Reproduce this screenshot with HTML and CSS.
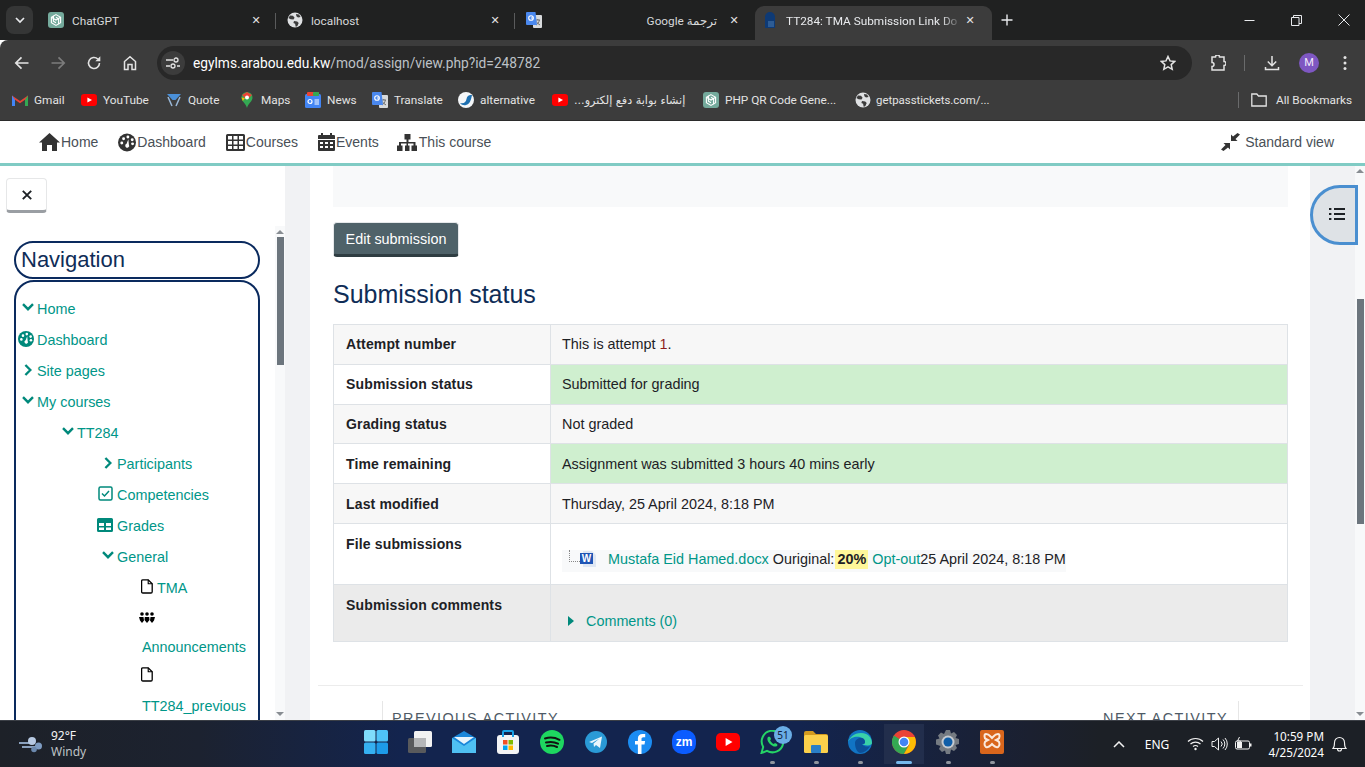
FILE: index.html
```html
<!DOCTYPE html>
<html lang="en">
<head>
<meta charset="utf-8">
<title>TT284: TMA Submission Link</title>
<link rel="stylesheet" href="styles.css">
</head>
<body>
<svg class="defs" width="0" height="0" aria-hidden="true">
  <defs>
    <symbol id="gpt" viewBox="0 0 16 16"><rect width="16" height="16" rx="3" fill="#74aa9c"/><g fill="none" stroke="#fff" stroke-width="1.1"><path d="M8 2.6l4.6 2.7v5.4L8 13.4l-4.6-2.7V5.3z"/><path d="M5.4 3.8v5.4L8 10.8M10.6 12.2V6.8L8 5.2M3.4 5.3l4.6 2.7 4.6-2.7"/></g></symbol>
    <symbol id="globe" viewBox="0 0 16 16"><circle cx="8" cy="8" r="7.5" fill="#dfe1e3"/><path d="M3 3.5l3 .2 1.6 2-1.1 1.8L3.6 7.2 1.4 6zM9 2l3 .5 1.6 2.4L11 5.6 9.4 4.2zM7 9l3.2.4 1.5 1.6-1.4 3.2-1.6.6-.6-3L6.4 11z" fill="#3c3c3c"/></symbol>
    <symbol id="gtrans" viewBox="0 0 16 16"><rect x="7" y="3" width="9" height="13" rx="1" fill="#d8dadc"/><path d="M9.5 8h4.5M11.8 7v1M10 13c2-1 3-3 3.4-5M10.4 9.5c.6 1.4 2 2.6 3.6 3.4" stroke="#666" stroke-width=".9" fill="none"/><path d="M1 0h8.5L11 13H1a1 1 0 0 1-1-1V1a1 1 0 0 1 1-1z" fill="#4a88ee"/><circle cx="5" cy="6" r="2.3" fill="none" stroke="#fff" stroke-width="1.1"/><path d="M5 6h2.4" stroke="#fff" stroke-width="1"/></symbol>
    <symbol id="yt" viewBox="0 0 16 12"><rect width="16" height="12" rx="3.2" fill="#f00"/><path d="M6.4 3.4L11 6l-4.6 2.6z" fill="#fff"/></symbol>
    <symbol id="chev-d" viewBox="0 0 12 8"><path d="M1 1.2l5 5 5-5" fill="none" stroke="#00897b" stroke-width="2.4"/></symbol>
    <symbol id="chev-r" viewBox="0 0 8 12"><path d="M1.4 1l5 5-5 5" fill="none" stroke="#00897b" stroke-width="2.4"/></symbol>
    <symbol id="file" viewBox="0 0 12 15"><path d="M1.8.8h5.4l4 4v8a1.2 1.2 0 0 1-1.2 1.2H1.8A1.2 1.2 0 0 1 .6 12.8V2A1.2 1.2 0 0 1 1.8.8z" fill="#fff" stroke="#000" stroke-width="1.3"/><path d="M7.2.8v4h4" fill="none" stroke="#000" stroke-width="1.1"/></symbol>
    <symbol id="gauge" viewBox="0 0 20 20"><circle cx="10" cy="10" r="10" fill="currentColor"/><circle cx="4.2" cy="10.5" r="1.6" fill="#fff"/><circle cx="6.2" cy="5.8" r="1.6" fill="#fff"/><circle cx="11" cy="3.9" r="1.6" fill="#fff"/><circle cx="15.8" cy="7" r="1.6" fill="#fff"/><circle cx="16.2" cy="11.5" r="1.6" fill="#fff"/><path d="M11.5 6.5L9.5 11.5a2.2 2.2 0 1 0 2.6.9z" fill="#fff"/></symbol>
  </defs>
</svg>

<header class="tabstrip">
  <button class="tabmenu"><svg width="10" height="7" viewBox="0 0 10 7"><path d="M1 1l4 4 4-4" fill="none" stroke="#e8eaed" stroke-width="1.7"/></svg></button>
  <div class="tab"><svg class="fav"><use href="#gpt"/></svg><span class="tab-title">ChatGPT</span><span class="tab-x">✕</span></div>
  <div class="tab tab-sep"><svg class="fav"><use href="#globe"/></svg><span class="tab-title">localhost</span><span class="tab-x">✕</span></div>
  <div class="tab tab-sep"><svg class="fav"><use href="#gtrans"/></svg><span class="tab-title tab-rtl" dir="rtl">ترجمة Google</span><span class="tab-x">✕</span></div>
  <div class="tab tab-active"><svg class="fav" viewBox="0 0 16 16"><path d="M3 16V5a5 5 0 0 1 10 0v11z" fill="#0e3a75"/><path d="M6 10h6M6 12h6M6 14h6" stroke="#4d7fb5" stroke-width="1"/></svg><span class="tab-title tab-fade">TT284: TMA Submission Link Do</span><span class="tab-x">✕</span></div>
  <svg class="newtab" width="12" height="12" viewBox="0 0 12 12"><path d="M6 .5v11M.5 6h11" stroke="#e8eaed" stroke-width="1.4"/></svg>
  <div class="winctl">
    <svg width="11" height="11" viewBox="0 0 11 11"><path d="M.5 5.5h10" stroke="#e8eaed"/></svg>
    <svg width="11" height="11" viewBox="0 0 11 11"><path d="M.5 2.5h7.5v8H.5zM2.5 2.5V.5h8v8H8" fill="none" stroke="#e8eaed"/></svg>
    <svg width="12" height="12" viewBox="0 0 12 12"><path d="M.5.5l11 11M11.5.5l-11 11" stroke="#e8eaed"/></svg>
  </div>
</header>

<nav class="toolbar">
  <svg class="tbtn" width="16" height="16" viewBox="0 0 16 16"><path d="M14.5 8H2M7.5 2.3L1.8 8l5.700 5.700" fill="none" stroke="#e3e3e3" stroke-width="1.7"/></svg>
  <svg class="tbtn" width="16" height="16" viewBox="0 0 16 16"><path d="M1.5 8H14M8.5 2.3L14.2 8l-5.700 5.700" fill="none" stroke="#7c7c7c" stroke-width="1.7"/></svg>
  <svg class="tbtn" width="16" height="16" viewBox="0 0 16 16"><path d="M13.5 8a5.5 5.5 0 1 1-1.700-4" fill="none" stroke="#e3e3e3" stroke-width="1.6"/><path d="M14.3 1.2v5h-5z" fill="#e3e3e3"/></svg>
  <svg class="tbtn" width="16" height="16" viewBox="0 0 16 16"><path d="M2.5 14.5V6.5L8 1.8l5.500 4.700v8h-3.500V9.500H6v5z" fill="none" stroke="#e3e3e3" stroke-width="1.5"/></svg>
  <div class="omnibox">
    <span class="site-btn"><svg width="14" height="12" viewBox="0 0 14 12"><path d="M0 3h7M11 9h3M0 9h4" stroke="#e3e3e3" stroke-width="1.4"/><circle cx="10" cy="3" r="2" fill="none" stroke="#e3e3e3" stroke-width="1.3"/><circle cx="7" cy="9" r="2" fill="none" stroke="#e3e3e3" stroke-width="1.3"/></svg></span>
    <span class="url"><b>egylms.arabou.edu.kw</b>/mod/assign/view.php?id=248782</span>
    <svg class="star" width="16" height="16" viewBox="0 0 16 16"><path d="M8 1.5l2 4.400 4.800.5-3.600 3.200 1 4.700L8 11.900l-4.200 2.400 1-4.700L1.200 6.400 6 5.900z" fill="none" stroke="#e3e3e3" stroke-width="1.5"/></svg>
  </div>
  <svg class="ext" width="16" height="16" viewBox="0 0 16 16"><path d="M2 2h3.500a2 2 0 0 1 4 0H14v4.500a2 2 0 0 1 0 4V15H2v-3.500a1.500 1.500 0 0 0 0-4z" fill="none" stroke="#e3e3e3" stroke-width="1.5"/></svg>
  <span class="tsep"></span>
  <svg class="dl" width="16" height="16" viewBox="0 0 16 16"><path d="M8 1v9.500M3.800 6.500L8 10.700l4.200-4.200M1.500 12v2.500h13V12" fill="none" stroke="#e3e3e3" stroke-width="1.5"/></svg>
  <span class="avatar">M</span>
  <svg class="kebab" width="4" height="16" viewBox="0 0 4 16"><circle cx="2" cy="2.5" r="1.5" fill="#e3e3e3"/><circle cx="2" cy="8" r="1.5" fill="#e3e3e3"/><circle cx="2" cy="13.5" r="1.5" fill="#e3e3e3"/></svg>
</nav>

<div class="bookmarks">
  <a class="bm bm-gmail"><svg class="fav" viewBox="0 0 16 12"><path d="M0 12V1.500L8 7l8-5.500V12h-3V5.800L8 9.300 3 5.800V12z" fill="#ea4335"/><path d="M13 12V5.800l3-4.300V12z" fill="#34a853"/><path d="M0 12V1.500l3 4.300V12z" fill="#4285f4"/></svg>Gmail</a>
  <a class="bm bm-yt"><svg class="fav"><use href="#yt"/></svg>YouTube</a>
  <a class="bm bm-quote"><svg class="fav" viewBox="0 0 16 16"><path d="M1 2h14L9.500 8h-3z" fill="#4a90d9"/><path d="M2 5l4 9M14 5l-4 9" stroke="#9ab8d8" stroke-width="1.5"/></svg>Quote</a>
  <a class="bm bm-maps"><svg class="fav" viewBox="0 0 16 16"><path d="M8 0a5.500 5.500 0 0 1 5.500 5.500C13.500 9.500 9 11.500 8 16 7 11.500 2.500 9.500 2.500 5.500A5.500 5.500 0 0 1 8 0z" fill="#34a853"/><path d="M3 3l5-3 5 3-3 3H6z" fill="#ea4335"/><path d="M2.500 5.500L6 6 3.800 9z" fill="#fbbc04"/><circle cx="8" cy="5.500" r="2" fill="#fff"/></svg>Maps</a>
  <a class="bm bm-news"><svg class="fav" viewBox="0 0 16 16"><rect y="2" width="16" height="14" rx="1.5" fill="#4285f4"/><rect x="2" width="12" height="4" rx="1" fill="#ea4335"/><rect x="8" y="0" width="6" height="4" rx="1" fill="#34a853"/><circle cx="5" cy="9.500" r="2" fill="none" stroke="#fff" stroke-width="1.2"/><path d="M9.500 8H14M9.500 10H14M9.500 12H14" stroke="#fff"/></svg>News</a>
  <a class="bm bm-trans"><svg class="fav"><use href="#gtrans"/></svg>Translate</a>
  <a class="bm bm-alt"><svg class="fav" viewBox="0 0 16 16"><circle cx="8" cy="8" r="8" fill="#f4f6f8"/><path d="M2 11c4 1 6-1 6.500-4S11 2.500 14 3c-1 5-2 9-6 10-2 .5-4.500 0-6-2z" fill="#1d6fb0"/></svg>alternative</a>
  <a class="bm bm-ar"><svg class="fav"><use href="#yt"/></svg><span class="ar" dir="rtl">إنشاء بوابة دفع إلكترو...</span></a>
  <a class="bm bm-php"><svg class="fav"><use href="#gpt"/></svg>PHP QR Code Gene...</a>
  <a class="bm bm-get"><svg class="fav"><use href="#globe"/></svg><span class="get-txt">getpasstickets.com/...</span></a>
  <span class="bm-sep"></span>
  <a class="bm bm-all"><svg class="fav" viewBox="0 0 16 14"><path d="M.8 1h5l1.700 2h7.700v10H.8z" fill="none" stroke="#e3e3e3" stroke-width="1.3"/></svg>All Bookmarks</a>
</div>

<div class="sitenav">
  <a class="nav-item"><svg width="21" height="18" viewBox="0 0 21 18"><path d="M10.500 0L21 9.500h-3V18h-5v-6H8v6H3V9.500H0z" fill="#333"/></svg>Home</a>
  <a class="nav-item"><svg class="nav-gauge" width="19" height="19"><use href="#gauge"/></svg>Dashboard</a>
  <a class="nav-item"><svg width="19" height="17" viewBox="0 0 19 17"><path d="M1.500 0h16A1.500 1.500 0 0 1 19 1.500v14a1.500 1.500 0 0 1-1.500 1.500h-16A1.500 1.500 0 0 1 0 15.500v-14A1.500 1.500 0 0 1 1.500 0zM2 2v3.500h4V2zm5.500 0v3.500h4V2zM13 2v3.500h4V2zM2 7v3.500h4V7zm5.500 0v3.500h4V7zM13 7v3.500h4V7zM2 12v3h4v-3zm5.500 0v3h4v-3zm5.500 0v3h4v-3z" fill="#333" fill-rule="evenodd"/></svg>Courses</a>
  <a class="nav-item"><svg width="17" height="18" viewBox="0 0 17 18"><path d="M3 0h2v2h7V0h2v2h2a1 1 0 0 1 1 1v3H0V3a1 1 0 0 1 1-1h2zM0 7h17v10a1 1 0 0 1-1 1H1a1 1 0 0 1-1-1zm2 2v2h3V9zm5 0v2h3V9zm5 0v2h3V9zM2 13v2h3v-2zm5 0v2h3v-2zm5 0v2h3v-2z" fill="#333" fill-rule="evenodd"/></svg>Events</a>
  <a class="nav-item nav-course"><svg width="21" height="17" viewBox="0 0 21 17"><path d="M7.500 0h6v5.500h-2v2.500h7v3.500h1.500v5.500h-5.500v-5.500h2V9.500h-5.500v2h1.500v5.500H8v-5.500h1.500v-2H4v2h1.500v5.500H0v-5.500h2V8h7.500V5.500h-2z" fill="#333"/></svg>This course</a>
  <a class="nav-item nav-std"><svg width="19" height="18" viewBox="0 0 19 18"><path d="M19 1.500L14.500 6l2 2H10V1.500l2 2L16.500 0z" fill="#333"/><path d="M0 16.500L4.500 12l-2-2H9v6.500l-2-2L2.500 18z" fill="#333"/></svg>Standard view</a>
</div>

<main class="workspace">
  <aside class="sidebar">
    <div class="side-inner">
      <button class="closebtn"><svg width="10" height="10" viewBox="0 0 10 10"><path d="M.8.8l8.400 8.400M9.200.8L.8 9.200" stroke="#1d2125" stroke-width="1.9"/></svg></button>
      <h2 class="nav-title">Navigation</h2>
      <div class="tree">
        <a class="row l0"><span class="ic"><svg class="chev-d"><use href="#chev-d"/></svg></span>Home</a>
        <a class="row l0"><span class="ic ic-flush"><svg class="tree-gauge" width="16" height="16"><use href="#gauge"/></svg></span>Dashboard</a>
        <a class="row l0"><span class="ic"><svg class="chev-r"><use href="#chev-r"/></svg></span>Site pages</a>
        <a class="row l0"><span class="ic"><svg class="chev-d"><use href="#chev-d"/></svg></span>My courses</a>
        <a class="row l1"><span class="ic"><svg class="chev-d"><use href="#chev-d"/></svg></span>TT284</a>
        <a class="row l2"><span class="ic"><svg class="chev-r"><use href="#chev-r"/></svg></span>Participants</a>
        <a class="row l2"><span class="ic ic-mid"><svg width="15" height="15" viewBox="0 0 15 15"><rect x="1" y="1" width="13" height="13" rx="1.5" fill="none" stroke="#00897b" stroke-width="1.5"/><path d="M4 7.500l2.500 2.500 4.500-5" fill="none" stroke="#00897b" stroke-width="1.5"/></svg></span>Competencies</a>
        <a class="row l2"><span class="ic ic-mid ic-grades"><svg width="16" height="14" viewBox="0 0 16 14"><path d="M1.500 0h13A1.500 1.500 0 0 1 16 1.500v11a1.500 1.500 0 0 1-1.500 1.500h-13A1.500 1.500 0 0 1 0 12.500v-11A1.500 1.500 0 0 1 1.500 0zM2 5v3h5V5zm7 0v3h5V5zM2 9.500V12h5V9.500zm7 0V12h5V9.500z" fill="#00897b" fill-rule="evenodd"/></svg></span>Grades</a>
        <a class="row l2"><span class="ic"><svg class="chev-d"><use href="#chev-d"/></svg></span>General</a>
        <a class="row l3"><span class="ic ic-file"><svg class="file-ic"><use href="#file"/></svg></span>TMA</a>
        <div class="sub sub-ic sub-people l3"><svg width="16" height="11" viewBox="0 0 16 11"><circle cx="3" cy="2" r="1.8"/><circle cx="8" cy="2" r="1.8"/><circle cx="13" cy="2" r="1.8"/><path d="M0 5h4.500l.5 3.500-2 2.500-2-2.500zM5.800 5h4.400l.3 3-2.500 3-2.500-3zM11.500 5H16l-1 3.500-2 2.500-2-2.500z"/></svg></div>
        <a class="sub sub-txt l3">Announcements</a>
        <div class="sub sub-ic l3"><svg class="file-ic"><use href="#file"/></svg></div>
        <a class="sub sub-txt sub-last l3">TT284_previous</a>
      </div>
    </div>
    <div class="scroll scroll-side">
      <i class="arr-up"></i><i class="thumb thumb-side"></i><i class="arr-down"></i>
    </div>
  </aside>

  <section class="content">
    <div class="inner">
      <div class="graybox"></div>
      <button class="editbtn">Edit submission</button>
      <h2 class="status-title">Submission status</h2>
      <table class="status">
        <tr class="r-std odd"><th>Attempt number</th><td>This is attempt <span class="red">1</span>.</td></tr>
        <tr class="r-std ok"><th>Submission status</th><td>Submitted for grading</td></tr>
        <tr class="r-std odd"><th>Grading status</th><td>Not graded</td></tr>
        <tr class="r-std ok"><th>Time remaining</th><td>Assignment was submitted 3 hours 40 mins early</td></tr>
        <tr class="r-std odd"><th>Last modified</th><td>Thursday, 25 April 2024, 8:18 PM</td></tr>
        <tr class="r-file"><th>File submissions</th><td>
          <div class="fileline"><i class="dots"></i><svg class="word" width="16" height="16" viewBox="0 0 16 16"><path d="M3 0h9l4 4v12H3z" fill="#dfe7f3"/><rect x="0" y="2" width="13" height="11" fill="#1f55b5"/><text x="6.5" y="11.300" class="word-w">W</text></svg><a class="lnk file-lnk">Mustafa Eid Hamed.docx</a> Ouriginal:<b class="score">20%</b><a class="lnk opt">Opt-out</a>25 April 2024, 8:18 PM</div>
        </td></tr>
        <tr class="r-comm"><th>Submission comments</th><td><div class="commline"><i class="tri"></i><a class="lnk">Comments (0)</a></div></td></tr>
      </table>
    </div>
    <div class="activity">
      <div class="act act-prev"><span class="act-arrow">←</span><span class="act-lbl">PREVIOUS ACTIVITY</span></div>
      <div class="act act-next"><span class="act-lbl">NEXT ACTIVITY</span><span class="act-arrow">→</span></div>
    </div>
  </section>

  <div class="gutter">
    <button class="drawer"><svg width="16" height="14" viewBox="0 0 16 14"><path d="M5 2h11M5 7h11M5 12h11" stroke="#1d2125" stroke-width="1.8"/><path d="M0 1h2.400v2H0zM0 6h2.400v2H0zM0 11h2.400v2H0z" fill="#1d2125"/></svg></button>
    <div class="scroll scroll-main">
      <i class="arr-up"></i><i class="thumb thumb-main"></i><i class="arr-down"></i>
    </div>
  </div>
</main>

<footer class="taskbar">
  <div class="weather">
    <svg width="24" height="17" viewBox="0 0 24 17"><path d="M0 7h15M3 11h17" stroke="#8aa0bd" stroke-width="1.8"/><circle cx="13" cy="5" r="4" fill="#b7c9e2"/><circle cx="19.500" cy="10" r="3.500" fill="#7e9cc2"/><circle cx="15" cy="13.500" r="2.800" fill="#6b88ad"/></svg>
    <div class="wtxt"><span class="w1">92°F</span><span class="w2">Windy</span></div>
  </div>
  <div class="apps">
    <div class="app"><svg width="24" height="24" viewBox="0 0 24 24"><rect width="11.500" height="11.500" rx="1.5" fill="#7fdcfb"/><rect x="12.500" width="11.500" height="11.500" rx="1.5" fill="#4fc3f7"/><rect y="12.500" width="11.500" height="11.500" rx="1.5" fill="#35b0f0"/><rect x="12.500" y="12.500" width="11.500" height="11.500" rx="1.5" fill="#1d9be8"/></svg></div>
    <div class="app"><svg width="24" height="22" viewBox="0 0 24 22"><rect y="7" width="18" height="15" rx="1.5" fill="#595a5c"/><rect x="6" width="18" height="16" rx="1.5" fill="#f2f2f2"/><rect x="6" y="7" width="12" height="9" fill="#b5b6b8"/></svg></div>
    <div class="app"><svg width="24" height="22" viewBox="0 0 24 22"><path d="M0 7l12-7 12 7v15H0z" fill="#1a86d9"/><path d="M0 7l12 8 12-8v15H0z" fill="#4fc0f2"/><path d="M2 6h20L12 13z" fill="#e8f4fc"/></svg></div>
    <div class="app"><svg width="22" height="24" viewBox="0 0 22 24"><rect y="5" width="22" height="19" rx="3" fill="#f3f4f5"/><path d="M6 7V2a1 1 0 0 1 1-1h8a1 1 0 0 1 1 1v5" fill="none" stroke="#19a3e8" stroke-width="2"/><rect x="6" y="10" width="4.500" height="4.500" fill="#f25022"/><rect x="11.500" y="10" width="4.500" height="4.500" fill="#7fba00"/><rect x="6" y="15.500" width="4.500" height="4.500" fill="#00a4ef"/><rect x="11.500" y="15.500" width="4.500" height="4.500" fill="#ffb900"/></svg></div>
    <div class="app"><svg width="24" height="24" viewBox="0 0 24 24"><circle cx="12" cy="12" r="12" fill="#1ed760"/><path d="M5 8.500c5-1.500 10-1 14.500 1.300M6 12.500c4-1 8.500-.7 12 1.200M7 16c3.500-.8 7-.5 10 1" fill="none" stroke="#111" stroke-width="2" stroke-linecap="round"/></svg></div>
    <div class="app"><svg width="22" height="22" viewBox="0 0 22 22"><circle cx="11" cy="11" r="11" fill="#2a9ad6"/><path d="M4 11l13-5.500-2 11.500-4-3-2 2-.5-3.500 6-5-7.500 4.500z" fill="#eaf6fc"/></svg></div>
    <div class="app"><svg width="24" height="24" viewBox="0 0 24 24"><circle cx="12" cy="12" r="12" fill="#1b8cf2"/><path d="M13.500 24v-9.500h3l.6-3.500h-3.600V9c0-1 .5-1.800 1.900-1.800h1.800V4.100S15.700 4 14.400 4c-2.700 0-4.500 1.600-4.500 4.600V11H7v3.500h2.900V24z" fill="#fff"/></svg></div>
    <div class="app"><svg width="24" height="24" viewBox="0 0 24 24"><rect width="24" height="24" rx="10" fill="#0b5cff"/><text x="12" y="16" class="zm">zm</text></svg></div>
    <div class="app"><svg width="24" height="18" viewBox="0 0 16 12"><use href="#yt" width="16" height="12"/></svg></div>
    <div class="app app-on"><svg width="24" height="24" viewBox="0 0 24 24"><path d="M1.500 23l1.700-6A10.800 10.800 0 1 1 7 20.800z" fill="none" stroke="#25d366" stroke-width="2"/><path d="M8 7c-1.500 2 0 5 2 7s5 3.500 7 2c.6-.6.500-1.500 0-2l-2-1-1.200 1c-1.500-.5-3-2-3.700-3.700l1-1.200-1-2c-.5-.6-1.500-.6-2.100-.1z" fill="#25d366"/></svg><span class="badge">51</span></div>
    <div class="app app-on"><svg width="24" height="22" viewBox="0 0 24 22"><path d="M0 2a2 2 0 0 1 2-2h7l3 3h10a2 2 0 0 1 2 2v2H0z" fill="#d39a1e"/><rect y="4" width="24" height="18" rx="1.5" fill="#fbd04b"/><rect x="7" y="14" width="10" height="8" rx="1" fill="#2a7fc7"/></svg></div>
    <div class="app app-on"><svg width="24" height="24" viewBox="0 0 24 24"><circle cx="12" cy="12" r="12" fill="#1174c4"/><path d="M24 13c0-4-3-10-11-10C6 3 1 8 0 12 3 5 16 5 17 12c0 1-1 2-3 2 3 2 10 2 10-1z" fill="#3ad1a8"/><path d="M7 13c0-3 3-5 6-5s4 2 4 4-1 2-3 2c2 3 6 3 8 2-2 4-6 7-10 7-3-1-5-5-5-10z" fill="#0c4f98"/></svg></div>
    <div class="app app-active"><svg width="24" height="24" viewBox="0 0 24 24"><circle cx="12" cy="12" r="12" fill="#ea4335"/><path d="M12 12L1.600 18A12 12 0 0 1 2 5.500z" fill="#34a853"/><path d="M12 24A12 12 0 0 1 1.600 18L7 12h5l6 0z" fill="#34a853"/><path d="M12 7h10.800A12 12 0 0 1 12 24l5.200-9z" fill="#fbbc04"/><circle cx="12" cy="12" r="5.500" fill="#fff"/><circle cx="12" cy="12" r="4.300" fill="#4285f4"/></svg></div>
    <div class="app app-on"><svg width="24" height="24" viewBox="0 0 24 24"><path d="M10 0h4l1 3.500 3-1.500 3 3-1.500 3 3.500 1v5l-3.500 1 1.500 3-3 3-3-1.500L14 24h-4l-1-3.500-3 1.500-3-3 1.500-3L0 14.500v-5l3.500-1L2 5.500l3-3 3 1.500z" fill="#757b82"/><circle cx="12" cy="12" r="6.500" fill="#c5cad0"/><circle cx="12" cy="12" r="4.500" fill="#0f5ea8"/></svg></div>
    <div class="app app-on"><svg width="24" height="24" viewBox="0 0 24 24"><rect width="24" height="24" rx="2" fill="#d9661c"/><path d="M6 4c3 0 4 2 6 4 2-2 3-4 6-4 2 0 2 4 0 5l-2 1 2 1v0c2 1 2 5 0 6-3 1-4-1-6-3-2 2-3 4-6 3-2-1-2-5 0-6l2-1-2-1C4 8 4 4 6 4z" fill="none" stroke="#fbe9dc" stroke-width="2"/></svg></div>
  </div>
  <div class="tray">
    <svg class="t-caret" width="12" height="7" viewBox="0 0 12 7"><path d="M1 6l5-5 5 5" fill="none" stroke="#f2f2f2" stroke-width="1.5"/></svg>
    <span class="t-eng">ENG</span>
    <svg class="t-wifi" width="17" height="14" viewBox="0 0 17 14"><path d="M1 4.500c4-4 11-4 15 0M3.500 7c2.800-2.600 7.200-2.600 10 0M6 9.500c1.500-1.200 3.500-1.200 5 0" fill="none" stroke="#f2f2f2" stroke-width="1.2"/><circle cx="8.500" cy="12" r="1.2" fill="#f2f2f2"/></svg>
    <svg class="t-vol" width="17" height="14" viewBox="0 0 17 14"><path d="M1 4.500h2.500L7.500 1v12L3.500 9.500H1z" fill="none" stroke="#f2f2f2"/><path d="M10 4.500a3.500 3.500 0 0 1 0 5M12 2.500a6.500 6.500 0 0 1 0 9M14 1a9 9 0 0 1 0 12" fill="none" stroke="#f2f2f2"/></svg>
    <svg class="t-bat" width="17" height="14" viewBox="0 0 17 14"><rect x=".5" y="4" width="14" height="8" rx="1.5" fill="none" stroke="#f2f2f2"/><rect x="15" y="6.500" width="1.500" height="3" fill="#f2f2f2"/><path d="M2 5h5v6H2z" fill="#f2f2f2"/><path d="M4.500 0L2.500 4h3L4 8" fill="none" stroke="#f2f2f2"/></svg>
    <div class="clock"><span>10:59 PM</span><span>4/25/2024</span></div>
    <svg class="t-bell" width="15" height="16" viewBox="0 0 15 16"><path d="M1 12.500c1.500-1.500 1.500-3 1.500-6a5 5 0 0 1 10 0c0 3 0 4.500 1.500 6zM5.500 13a2 2 0 0 0 4 0" fill="none" stroke="#f2f2f2" stroke-width="1.1"/></svg>
  </div>
</footer>
</body>
</html>
```

FILE: styles.css
```css
* { box-sizing: border-box; }
html, body { margin: 0; padding: 0; }
body {
  width: 1365px;
  height: 767px;
  overflow: hidden;
  display: flex;
  flex-direction: column;
  font-family: "Liberation Sans", Arial, sans-serif;
  font-size: 14px;
  color: #1d2125;
  background: #fff;
}
.defs { position: absolute; }
button { font-family: inherit; }

/* browser chrome */
.tabstrip {
  height: 40px;
  flex: none;
  display: flex;
  background: #202121;
  padding-left: 6px;
  font-family: Roboto, "DejaVu Sans", sans-serif;
  font-size: 11.8px;
  color: #d6d8da;
  align-items: flex-end;
}
.tabmenu {
  width: 27px;
  height: 28px;
  margin: 0 3px 6px 0;
  border: 0;
  border-radius: 8px;
  background: #353636;
  display: flex;
  align-items: center;
  justify-content: center;
  padding: 0;
}
.tab {
  width: 239px;
  height: 34px;
  display: flex;
  align-items: center;
  padding: 0 11px 0 12px;
  position: relative;
  flex: none;
}
.tab-sep::before {
  content: "";
  position: absolute;
  left: 0;
  top: 7px;
  height: 16px;
  width: 1px;
  background: #5a5b5c;
}
.tab-active {
  background: #3c3c3c;
  border-radius: 9px 9px 0 0;
  width: 237px;
  margin-left: 2px;
  padding: 0 14px 0 7px;
  color: #e8eaed;
}
.fav { width: 16px; height: 16px; flex: none; margin-right: 8px; }
.tab-title { flex: 1; white-space: nowrap; overflow: hidden; padding-bottom: 5px; }
.tab .fav { margin-bottom: 6px; }
.tab-x { font-size: 11px; width: 16px; text-align: center; padding-bottom: 5px; color: #e3e3e3; }
.tab-rtl { text-align: right; padding-right: 9px; }
.tab-fade {
  -webkit-mask-image: linear-gradient(to right, #000 88%, transparent 100%);
  mask-image: linear-gradient(to right, #000 88%, transparent 100%);
}
.newtab { margin: 0 0 14px 9px; }
.winctl {
  margin-left: auto;
  display: flex;
  align-items: center;
  gap: 36px;
  padding: 0 15px 14px 0;
}

.toolbar {
  height: 40px;
  flex: none;
  display: flex;
  align-items: center;
  background: #3c3c3c;
  padding: 6px 0 0 14px;
  border-radius: 8px 0 0 0;
}
.tbtn { margin-right: 20px; flex: none; }
.tbtn:nth-child(4) { margin-right: 19px; }
.omnibox {
  width: 1035px;
  height: 34px;
  border-radius: 17px;
  background: #282828;
  display: flex;
  align-items: center;
  padding: 0 16px 0 4px;
  flex: none;
}
.site-btn {
  width: 24px;
  height: 24px;
  border-radius: 50%;
  background: #3c3c3c;
  display: flex;
  align-items: center;
  justify-content: center;
  margin-right: 8px;
}
.url {
  flex: 1;
  font-family: Roboto, sans-serif;
  font-size: 13.75px;
  color: #bdc1c6;
  white-space: nowrap;
}
.url b { font-weight: 400; color: #fff; }
.ext { margin-left: 18px; flex: none; }
.tsep { width: 1px; height: 16px; background: #6a6b6c; margin: 0 19px 0 18px; flex: none; }
.dl { flex: none; }
.avatar {
  width: 20px;
  height: 20px;
  border-radius: 50%;
  background: #7e57c2;
  color: #f0e9fa;
  font: 11px Roboto, sans-serif;
  text-align: center;
  line-height: 20px;
  margin-left: 19px;
  flex: none;
}
.kebab { margin-left: 24px; flex: none; }

.bookmarks {
  height: 41px;
  flex: none;
  background: #3c3c3c;
  border-bottom: 1px solid #2b2b2b;
  display: flex;
  align-items: center;
  padding: 0 0 0 12px;
  font-family: Roboto, "DejaVu Sans", sans-serif;
  font-size: 11.8px;
  color: #e3e3e3;
}
.bm { display: flex; align-items: center; flex: none; white-space: nowrap; }
.bm .fav { margin-right: 6px; }
.bm-gmail { width: 69px; }
.bm-yt { width: 85px; }
.bm-quote { width: 73px; }
.bm-maps { width: 66px; }
.bm-news { width: 67px; }
.bm-trans { width: 86px; }
.bm-alt { width: 94px; }
.bm-ar { width: 151px; }
.bm-php { width: 152px; }
.bm-get { width: 383px; }
.bm-get .fav { margin-right: 5px; }
.get-txt { font-size: 11.4px; }
.bm-sep { width: 1px; height: 16px; background: #6a6b6c; margin-right: 12px; flex: none; }
.bm-all .fav { margin-right: 9px; }
.ar { font-family: "DejaVu Sans", sans-serif; font-size: 11.2px; }

/* moodle navbar */
.sitenav {
  height: 45px;
  flex: none;
  background: #fff;
  border-bottom: 3px solid #80cbc4;
  display: flex;
  align-items: center;
  padding: 0 31px 0 39px;
  gap: 20px;
  color: #495057;
  font-size: 14px;
}
.nav-item { display: flex; align-items: center; white-space: nowrap; }
.nav-gauge { color: #333; width: 18px; height: 19px; }
.nav-item svg { flex: none; margin-right: 1px; }
.nav-course { margin-left: -2px; }
.nav-std { margin-left: auto; }
.nav-std svg { margin-right: 5px; }

/* main */
.workspace {
  flex: 1;
  min-height: 0;
  display: flex;
  overflow: hidden;
  position: relative;
  background: #f1f2f4;
}
.sidebar {
  width: 285px;
  flex: none;
  display: flex;
  background: #fff;
}
.side-inner { width: 275px; flex: none; padding: 12px 0 0 6px; font-size: 14.4px; }
.closebtn {
  display: flex;
  align-items: center;
  justify-content: center;
  width: 41px;
  height: 35px;
  border: 1px solid #e6e7e8;
  border-bottom: 3px solid #9a9ea3;
  border-radius: 4px;
  background: #fff;
  padding: 0;
}
.nav-title {
  margin: 28px 0 1px 8px;
  width: 246px;
  height: 38px;
  border: 2px solid #0a2a5e;
  border-radius: 19px;
  font-weight: 400;
  font-size: 22px;
  line-height: 33px;
  padding-left: 5px;
  color: #0f2d57;
}
.tree {
  margin-left: 8px;
  width: 246px;
  border: 2px solid #0a2a5e;
  border-radius: 20px;
  padding: 11px 0 30px 2px;
  color: #009688;
  font-size: 14.4px;
}
.row { display: flex; align-items: center; height: 31px; white-space: nowrap; }
.ic { width: 19px; flex: none; display: flex; align-items: center; padding-left: 4px; }
.ic-flush { padding-left: 0; }
.ic-mid { padding-left: 0; }
.ic-mid svg { margin-top: -2px; }
.ic-grades svg { margin-left: -1px; }
.ic-file { padding-left: 3px; }
.l1 { margin-left: 40px; }
.l2 { margin-left: 80px; }
.l3 { margin-left: 120px; }
.chev-d { width: 12px; height: 8px; margin-top: -4px; }
.chev-r { width: 8px; height: 12px; margin-left: 2px; margin-top: -2px; }
.tree-gauge { color: #00897b; margin-top: -2px; }
.file-ic { width: 12px; height: 15px; margin-top: -3px; }
.sub { display: flex; align-items: center; white-space: nowrap; padding-left: 3px; }
.sub-ic { height: 28px; }
.sub-people { padding-left: 1px; }
.sub-txt { height: 31px; padding-left: 4px; }
.sub-last { height: 32px; }

.scroll {
  width: 10px;
  flex: none;
  background: #f8f9fa;
  display: flex;
  flex-direction: column;
  align-items: center;
}
.scroll-side { margin-top: 60px; padding: 4px 0 4px; }
.scroll-main { padding: 3px 0 4px; }
.arr-up { width: 0; height: 0; border: 4px solid transparent; border-top: 0; border-bottom: 4px solid #888d92; }
.arr-down { width: 0; height: 0; border: 4px solid transparent; border-bottom: 0; border-top: 4px solid #888d92; margin-top: auto; }
.thumb { width: 7px; background: #6c757d; }
.thumb-side { height: 128px; margin-top: 3px; }
.thumb-main { height: 225px; margin-top: 126px; }

.content {
  width: 1000px;
  margin-left: 25px;
  flex: none;
  background: #fff;
  padding: 0 7px 0 8px;
}
.inner { padding: 0 15px; }
.graybox { height: 41px; background: #f8f9fa; }
.editbtn {
  display: block;
  margin: 15px 0 0 0;
  width: 126px;
  height: 35px;
  border: 1px solid #e6e8ea;
  border-bottom: 3px solid #2f3d42;
  border-radius: 4px;
  background: #4f6269;
  color: #fff;
  font-size: 14.4px;
  padding: 0;
}
.status-title {
  margin: 22px 0 15px;
  font-weight: 400;
  font-size: 25px;
  line-height: 30px;
  color: #0f2d57;
}
.status {
  width: 955px;
  border-collapse: collapse;
  table-layout: fixed;
  font-size: 14.4px;
}
.status th, .status td { border: 1px solid #dee2e6; text-align: left; }
.status th { padding: 0 12px; }
.status td { padding: 0 11px; }
.status th { width: 217px; font-size: 14px; font-weight: 700; letter-spacing: .15px; }
.r-std { height: 39.8px; }
.odd { background: #f7f7f7; }
.ok td { background: #cfefcf; }
.ok th { background: #fff; }
.red { color: #8e1b1b; }
.r-file { height: 61px; background: #fff; }
.r-file th, .r-comm th { vertical-align: top; padding-top: 12px; }
.status .r-file td { vertical-align: top; padding-top: 26px; }
.fileline {
  display: flex;
  align-items: flex-start;
  height: 22px;
  line-height: 19px;
  background: #f8f9fa;
  white-space: pre;
  width: 504px;
}
.dots {
  width: 11px;
  height: 12px;
  margin-left: 7px;
  border-left: 1px dotted #888;
  border-bottom: 1px dotted #888;
  flex: none;
}
.word { margin-top: 1px; flex: none; }
.word-w { font: 700 10px "Liberation Sans", sans-serif; fill: #fff; text-anchor: middle; }
.lnk { color: #009688; }
.file-lnk { margin-left: 12px; }
.score { background: #fff79a; padding: 0 2px; margin-left: 1px; }
.opt { margin-left: 4px; }
.r-comm { height: 57px; background: #ebebeb; }
.status .r-comm td { vertical-align: top; padding-top: 28px; }
.commline { display: flex; align-items: center; padding-left: 6px; }
.tri {
  width: 0;
  height: 0;
  border-left: 6px solid #00897b;
  border-top: 5px solid transparent;
  border-bottom: 5px solid transparent;
  margin-right: 12px;
}
.activity {
  margin-top: 43px;
  border-top: 1px solid #ececec;
  padding: 15px 35px 0 35px;
  display: flex;
  justify-content: space-between;
  font-size: 14.4px;
}
.act { display: flex; align-items: flex-start; height: 50px; }
.act-lbl { letter-spacing: 1.45px; padding-top: 9px; color: #4e5a66; }
.act-arrow { width: 29px; text-align: center; color: #999; padding-top: 12px; }
.act-prev .act-lbl { border-left: 1px solid #e6e6e6; padding-left: 9px; height: 40px; }
.act-next .act-lbl { border-right: 1px solid #e6e6e6; padding-right: 10px; height: 40px; }
.gutter {
  flex: 1;
  min-width: 0;
  background: #f1f2f4;
  display: flex;
  justify-content: flex-end;
}
.drawer {
  position: absolute;
  left: 1310px;
  top: 19px;
  width: 48px;
  height: 60px;
  border: 3px solid #4a8fd0;
  border-radius: 30px 0 0 30px;
  background: #dee2e6;
  padding: 0 0 2px 6px;
  display: flex;
  align-items: center;
  justify-content: center;
}

/* taskbar */
.taskbar {
  height: 47px;
  flex: none;
  display: flex;
  align-items: center;
  border-top: 1px solid #3b3f46;
  background: linear-gradient(to right, #1d2128 0, #1c2230 200px, #13244e 400px, #13244e 800px, #1b2030 1030px, #1c2026 1100px);
  font-family: "Noto Sans", "Open Sans", sans-serif;
  font-size: 12px;
  color: #fff;
}
.weather { width: 354px; flex: none; display: flex; align-items: center; padding-left: 19px; }
.wtxt { display: flex; flex-direction: column; margin-left: 8px; line-height: 16px; }
.w1 { color: #f4f4f4; }
.w2 { color: #bfc2c6; }
.apps { display: flex; flex: none; }
.app {
  width: 44px;
  height: 46px;
  display: flex;
  align-items: center;
  justify-content: center;
  position: relative;
  padding-bottom: 4px;
}
.app-on::after, .app-active::after {
  content: "";
  position: absolute;
  bottom: 3px;
  left: 20px;
  width: 5px;
  height: 3px;
  border-radius: 2px;
  background: #8f959e;
}
.app-active { background: linear-gradient(#222e4c, #222e4c) center / 40px 40px no-repeat; }
.app-active::after { left: 14px; width: 16px; background: #76b9ed; }
.badge {
  position: absolute;
  left: 24px;
  top: 5px;
  width: 18px;
  height: 18px;
  border-radius: 50%;
  background: #6aaee6;
  color: #10203c;
  font-size: 10px;
  line-height: 18px;
  text-align: center;
}
.zm { font: 700 12px "Liberation Sans", sans-serif; fill: #fff; text-anchor: middle; }
.tray { display: flex; align-items: center; flex: 1; min-width: 0; padding-left: 99px; }
.t-caret { flex: none; margin-right: 19px; }
.t-eng { width: 26px; text-align: center; margin-right: 17px; }
.t-wifi { flex: none; margin-right: 7px; }
.t-vol { flex: none; margin-right: 7px; }
.t-bat { flex: none; }
.clock { width: 72px; flex: none; display: flex; flex-direction: column; align-items: flex-end; line-height: 16px; font-size: 11.7px; }
.t-bell { flex: none; margin-left: 8px; }
```
